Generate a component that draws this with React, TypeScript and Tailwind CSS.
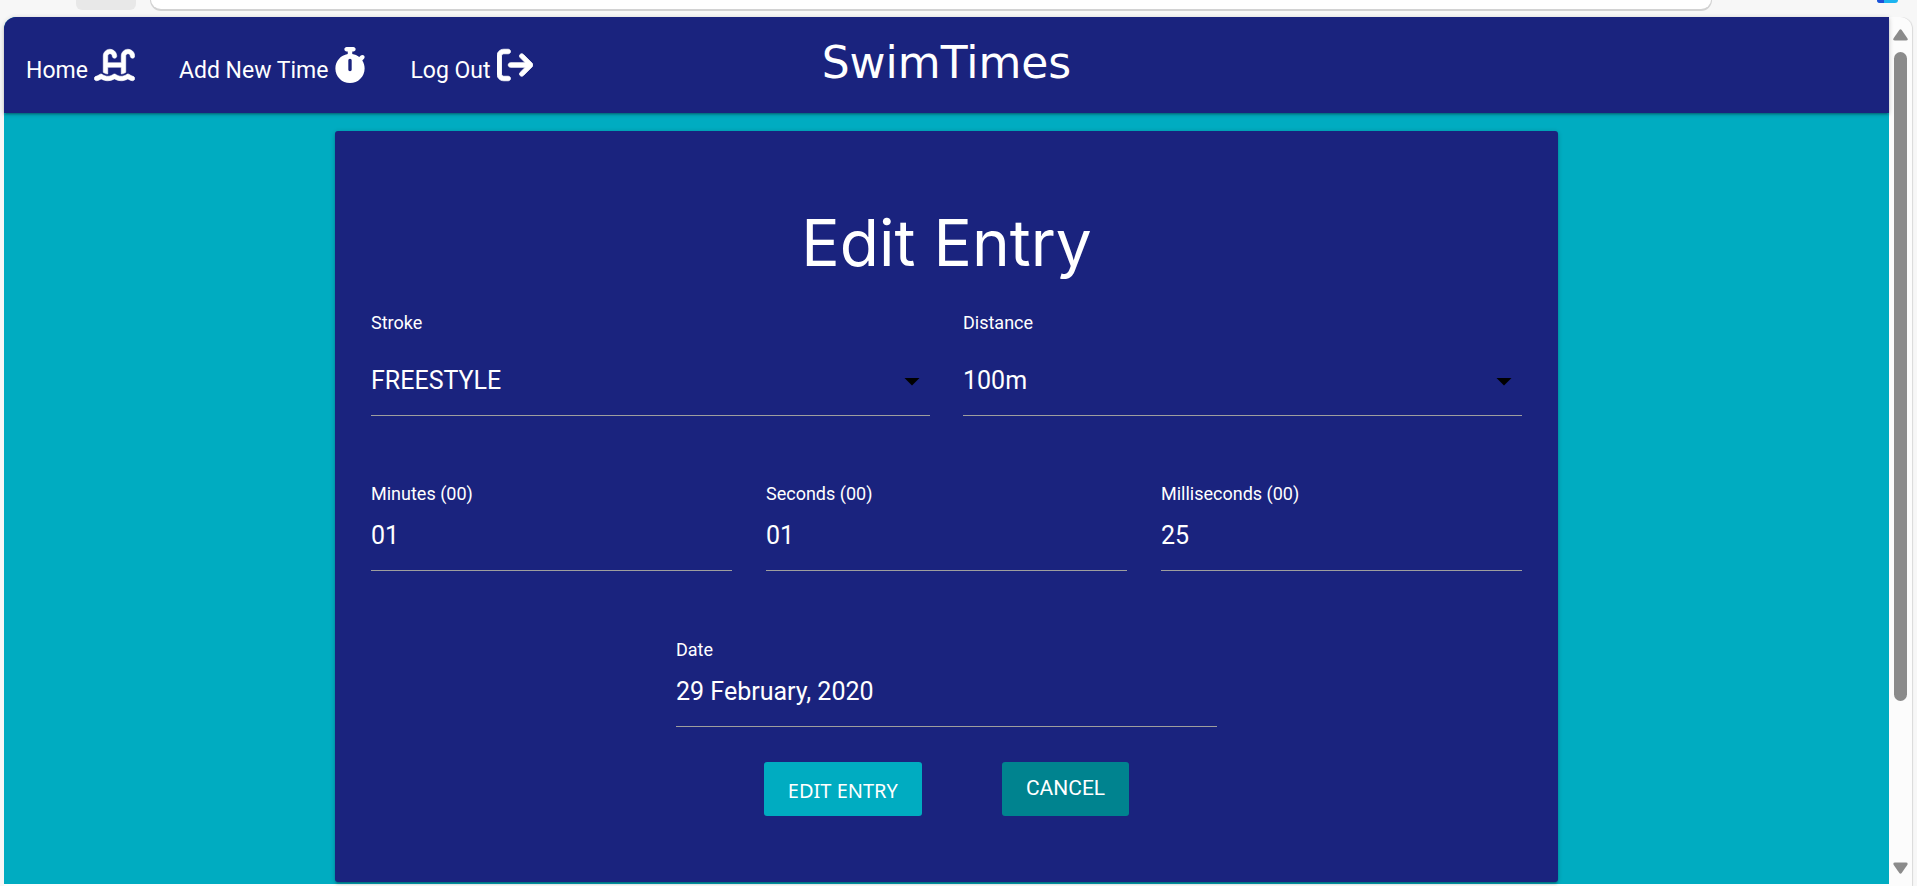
import { useState } from "react";
import type { ReactNode } from "react";
import { FaArrowRightFromBracket, FaStopwatch, FaWaterLadder } from "react-icons/fa6";

const STROKES = ["FREESTYLE", "BACKSTROKE", "BREASTSTROKE", "BUTTERFLY", "MEDLEY"];
const DISTANCES = ["50m", "100m", "200m", "400m", "800m", "1500m"];

function BrowserBar() {
  return (
    <div className="relative flex h-[17px] items-start overflow-hidden bg-[#f7f7f7] pl-[76px]">
      <div className="h-[10px] w-[60px] shrink-0 rounded-b-md bg-[#e8e8e8]" />
      <div className="ml-[14px] mr-[205px] h-[11px] grow rounded-b-[24px] border-x border-b-2 border-[#d2d2d2] bg-white" />
      <div className="absolute right-[19px] top-0 flex h-[3px] w-[21px] overflow-hidden rounded-b-md bg-[#1cb4f0]">
        <div className="w-[7px] bg-[#1f4fd8]" />
      </div>
    </div>
  );
}

function ScrollBar() {
  return (
    <div
      aria-hidden="true"
      className="flex w-[23px] shrink-0 flex-col items-center rounded-tr-xl bg-[#fcfcfc] pb-3 pt-3 shadow-[1px_0_1px_rgba(0,0,0,0.12)]"
    >
      <svg viewBox="0 0 15 12" className="h-3 w-[15px] shrink-0" fill="#8b8b8b">
        <path d="M6.3 1.1Q7.5-.5 8.7 1.1L14.4 9.2Q15.3 11.5 13 11.5H2Q-.3 11.5.6 9.2Z" />
      </svg>
      <div className="mt-[11px] w-[13px] grow-[649] rounded-full bg-[#8b8b8b]" />
      <div className="grow-[161]" />
      <svg viewBox="0 0 15 12" className="h-3 w-[15px] shrink-0" fill="#8b8b8b">
        <path d="M6.3 10.9Q7.5 12.5 8.7 10.9L14.4 2.8Q15.3.5 13 .5H2Q-.3.5.6 2.8Z" />
      </svg>
    </div>
  );
}

function NavLink({ label, children }: { label: string; children: ReactNode }) {
  return (
    <a href="#" className="flex items-end gap-[6px] text-[23px] leading-6">
      {label}
      {children}
    </a>
  );
}

function Header() {
  return (
    <header className="relative z-10 grid h-24 grid-cols-[1fr_auto_1fr] items-center rounded-tl-xl bg-[#1a237e] shadow-[0_2px_2px_0_rgba(0,0,0,0.14),0_3px_1px_-2px_rgba(0,0,0,0.12),0_1px_5px_0_rgba(0,0,0,0.2)]">
      <nav className="flex items-center gap-11 pl-[22px]">
        <NavLink label="Home">
          <FaWaterLadder className="h-9 w-[41px]" strokeWidth={8} />
        </NavLink>
        <NavLink label="Add New Time">
          <FaStopwatch className="h-9 w-8" />
        </NavLink>
        <NavLink label="Log Out">
          <FaArrowRightFromBracket className="h-9 w-9" strokeWidth={12} />
        </NavLink>
      </nav>
      <a href="#" className="pb-1 font-['DejaVu_Sans',sans-serif] text-[44px] leading-[56px]">
        SwimTimes
      </a>
    </header>
  );
}

const CONTROL =
  "h-[55px] w-full appearance-none rounded-none border-b border-[#9e9e9e] bg-transparent pb-[15px] text-[25px] text-white outline-none";

function TextField({ id, label, initial }: { id: string; label: string; initial: string }) {
  const [value, setValue] = useState(initial);
  return (
    <div className="flex flex-col gap-[9px]">
      <label htmlFor={id} className="text-lg leading-[27px]">
        {label}
      </label>
      <input id={id} type="text" value={value} onChange={(e) => setValue(e.target.value)} className={CONTROL} />
    </div>
  );
}

function SelectField({ id, label, initial, options }: { id: string; label: string; initial: string; options: string[] }) {
  const [value, setValue] = useState(initial);
  return (
    <div className="flex flex-col gap-[25px]">
      <label htmlFor={id} className="text-lg leading-[27px]">
        {label}
      </label>
      <div className="relative">
        <select id={id} value={value} onChange={(e) => setValue(e.target.value)} className={CONTROL}>
          {options.map((option) => (
            <option key={option} className="text-black">
              {option}
            </option>
          ))}
        </select>
        <svg viewBox="0 0 24 24" className="pointer-events-none absolute right-0 top-[2px] size-9" fill="#000">
          <path d="M7 10l5 5 5-5z" />
        </svg>
      </div>
    </div>
  );
}

function EditEntryForm() {
  return (
    <form
      onSubmit={(e) => e.preventDefault()}
      className="mx-auto flex w-full max-w-[1223px] flex-col rounded-[3px] bg-[#1a237e] px-9 pb-[66px] pt-[76px] shadow-[0_2px_2px_0_rgba(0,0,0,0.14),0_3px_1px_-2px_rgba(0,0,0,0.12),0_1px_5px_0_rgba(0,0,0,0.2)]"
    >
      <h1 className="text-center font-[Inter,sans-serif] text-[64px] leading-[72px]">Edit Entry</h1>
      <div className="mt-[30px] grid grid-cols-2 gap-[33px]">
        <SelectField id="stroke" label="Stroke" initial="FREESTYLE" options={STROKES} />
        <SelectField id="distance" label="Distance" initial="100m" options={DISTANCES} />
      </div>
      <div className="mt-16 grid grid-cols-3 gap-[34px]">
        <TextField id="minutes" label="Minutes (00)" initial="01" />
        <TextField id="seconds" label="Seconds (00)" initial="01" />
        <TextField id="milliseconds" label="Milliseconds (00)" initial="25" />
      </div>
      <div className="mx-auto mt-[65px] w-[47%]">
        <TextField id="date" label="Date" initial="29 February, 2020" />
      </div>
      <div className="mt-[35px] flex justify-center gap-20">
        <button
          type="submit"
          className="h-[54px] rounded-[3px] bg-[#00acc1] px-6 pt-1 font-['Noto_Sans',sans-serif] text-xl"
        >
          EDIT ENTRY
        </button>
        <button type="button" className="h-[54px] rounded-[3px] bg-[#00838f] px-6 text-[21px]">
          CANCEL
        </button>
      </div>
    </form>
  );
}

export default function App() {
  return (
    <div className="flex min-h-screen flex-col bg-[#f7f7f7] font-[Roboto,sans-serif] text-white">
      <BrowserBar />
      <div className="flex grow pl-1 pr-[5px]">
        <div className="flex grow flex-col rounded-tl-xl border-b-2 border-[#fcfcfc] bg-[#00acc1]">
          <Header />
          <main className="grow pb-[2px] pt-[18px]">
            <EditEntryForm />
          </main>
        </div>
        <ScrollBar />
      </div>
    </div>
  );
}
